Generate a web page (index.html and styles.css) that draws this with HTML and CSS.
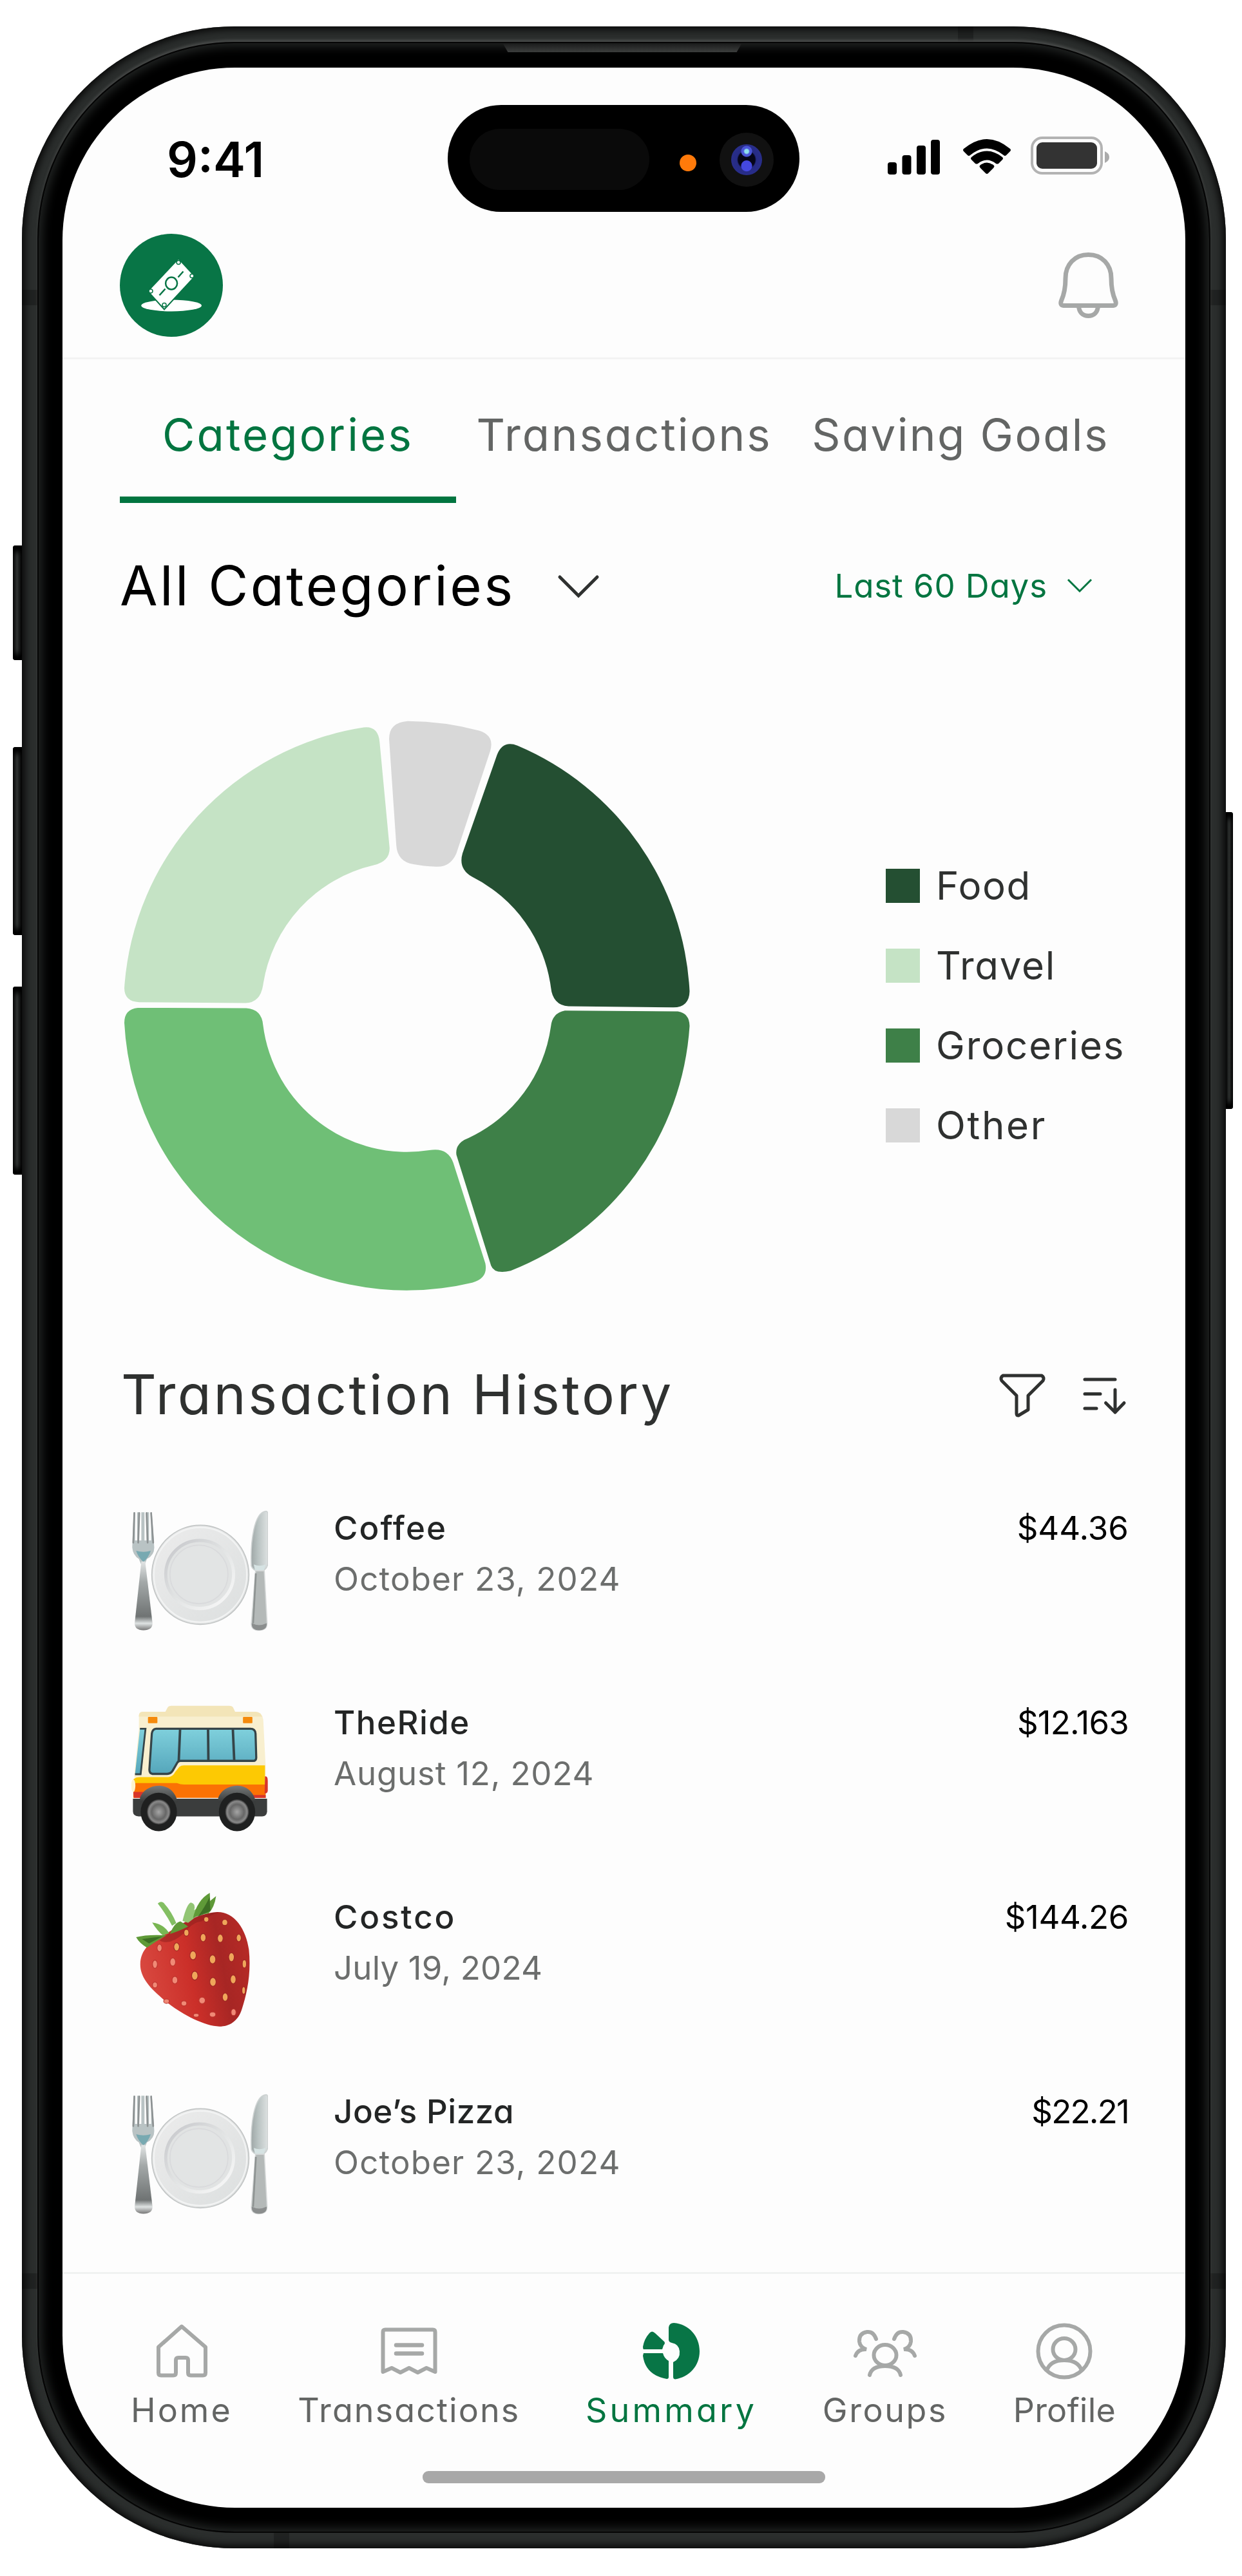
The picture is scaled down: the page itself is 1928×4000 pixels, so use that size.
FILE: index.html
```html
<!DOCTYPE html>
<html lang="en">
<head>
    <meta charset="UTF-8">
    <title>Summary - Categories</title>
    <link rel="stylesheet" href="styles.css">
</head>
<body>
    <div class="phone">
        <span class="side-button action"></span>
        <span class="side-button volume-up"></span>
        <span class="side-button volume-down"></span>
        <span class="side-button power"></span>
        <span class="band band-left-top"></span>
        <span class="band band-right-top"></span>
        <span class="band band-left-bottom"></span>
        <span class="band band-right-bottom"></span>
        <span class="band band-top"></span>
        <span class="band band-bottom"></span>
        <div class="bezel"></div>
        <div class="speaker"></div>

        <div class="screen">
            <div class="island">
                <span class="island-sensor"></span>
                <span class="island-dot"></span>
                <span class="island-camera"><span class="lens"></span></span>
            </div>

            <div class="status-bar">
                <span class="time">9:41</span>
                <svg class="status-icons" viewBox="1376 208 348 68">
                    <g fill="#000">
                        <rect x="1378" y="252" width="14" height="19" rx="4"/>
                        <rect x="1400.500" y="241" width="14" height="30" rx="4"/>
                        <rect x="1423" y="226" width="14" height="45" rx="4"/>
                        <rect x="1445" y="217" width="14" height="54" rx="4"/>
                        <path d="M1496 231Q1532 201 1568 231Q1570 233 1568 235L1562 241Q1560 243 1558 241Q1532 220 1506 241Q1504 243 1502 241L1496 235Q1494 233 1496 231Z"/>
                        <path d="M1508 244Q1532 225 1556 244Q1558 246 1556 248L1550 254Q1548 255 1546 254Q1532 243 1518 254Q1516 255 1514 254L1508 248Q1506 246 1508 244Z"/>
                        <path d="M1521 257Q1532 248 1543 257Q1544 259 1542 261L1534 269Q1532 271 1530 269L1522 261Q1520 259 1521 257Z"/>
                    </g>
                    <rect x="1602" y="214" width="108" height="55" rx="16" fill="none" stroke="#b3b3b3" stroke-width="4"/>
                    <rect x="1609" y="221" width="94" height="41" rx="9" fill="#333"/>
                    <path d="M1715 235Q1722 238 1722 244Q1722 250 1715 253Z" fill="#aaa"/>
                </svg>
            </div>

            <div class="header">
                <svg class="logo" viewBox="185.500 362.500 160 160">
                    <circle cx="265.500" cy="442.500" r="80" fill="#087546"/>
                    <ellipse cx="265.600" cy="474" rx="47" ry="9" fill="#fff"/>
                    <path d="M276.600 401L302 428.600L254.500 480L229 451.600Z" fill="#fff" stroke="#087546" stroke-width="2"/>
                    <ellipse cx="265.600" cy="439.500" rx="9" ry="9.500" fill="none" stroke="#087546" stroke-width="2.500"/>
                    <path d="M276 430L284 421M247 458L256 448" stroke="#087546" stroke-width="2.500"/>
                    <g fill="#fff" stroke="#087546" stroke-width="1.500">
                        <circle cx="276.600" cy="407" r="3"/>
                        <circle cx="297.500" cy="428" r="3"/>
                        <circle cx="254.500" cy="473" r="3"/>
                        <circle cx="233.500" cy="451.500" r="3"/>
                    </g>
                </svg>
                <svg class="bell" viewBox="1640 388 100 110">
                    <g fill="none" stroke="#a6a8a7" stroke-width="7" stroke-linejoin="round">
                        <path d="M1689.500 395.500C1668 395.500 1654 411 1654 432C1654 448 1652 457 1647.500 467Q1645 474 1651 474.500H1728Q1734 474 1731.500 467C1727 457 1725 448 1725 432C1725 411 1711 395.500 1689.500 395.500Z"/>
                        <path d="M1674.500 475C1675 485 1681 490.500 1689.500 490.500C1698 490.500 1704 485 1704.500 475"/>
                    </g>
                </svg>
            </div>

            <div class="tabs">
                <div class="tab active"><span class="tab-categories">Categories</span></div>
                <div class="tab"><span class="tab-transactions">Transactions</span></div>
                <div class="tab"><span class="tab-goals">Saving Goals</span></div>
            </div>

            <div class="filters">
                <div class="category-select">
                    <span class="heading heading-categories">All Categories</span>
                    <svg class="chevron" viewBox="0 0 66 38"><path d="M4 4L33 33L62 4" fill="none" stroke="#2f3130" stroke-width="5" stroke-linecap="round"/></svg>
                </div>
                <div class="range-select">
                    <span>Last 60 Days</span>
                    <svg class="chevron-small" viewBox="0 0 40 24"><path d="M2 3L20 21L38 3" fill="none" stroke="#027540" stroke-width="3"/></svg>
                </div>
            </div>

            <div class="chart-section">
                <svg class="donut" viewBox="190 1116 884 890">
                    <path fill="#d8d8d8" d="M632.800 1119.800A444 444 0 0 1 743.600 1134.500Q768 1142 761.100 1165.700L708.500 1325Q699 1347 677 1345.700Q657 1345 641.900 1342Q617 1338 615.200 1312.700L604 1147.300Q604 1122 632.800 1119.800Z"/>
                    <path fill="#244f32" d="M803.200 1157.800A439 439 0 0 1 1070.500 1539.200Q1070 1564 1045.300 1564.300L882.500 1562.500Q858 1561 855.100 1533A225 225 0 0 0 733 1361.600Q711 1349 718 1325L771.700 1171.800Q781 1149 803.200 1157.800Z"/>
                    <path fill="#3e8048" d="M876.900 1569.200L1052.300 1570.400Q1070 1573 1070.500 1593A439 439 0 0 1 792.700 1973.300Q765 1980 761.100 1961.600L708.500 1793.300Q706 1775 727.500 1767A225 225 0 0 0 855.100 1594.300Q857 1573 876.900 1569.200Z"/>
                    <path fill="#6fbf76" d="M214 1565L382.300 1565.500Q406 1567 408.300 1591.200A225 225 0 0 0 666.400 1786Q695 1781 703.600 1805.500L753.400 1961.700Q758 1985 733 1991.700A439 439 0 0 1 193 1588.200Q193 1567 214 1565Z"/>
                    <path fill="#c5e3c5" d="M564.700 1129.600Q587 1127 589.300 1152.200L604.700 1315.700Q606 1337 580.800 1343.300A225 225 0 0 0 408.300 1530Q404 1557 380.900 1557.600L216 1556.300Q193 1555 193 1534.300A439 439 0 0 1 564.700 1129.600Z"/>
                </svg>
                <ul class="legend">
                    <li><i class="swatch food"></i><span class="legend-food">Food</span></li>
                    <li><i class="swatch travel"></i><span class="legend-travel">Travel</span></li>
                    <li><i class="swatch groceries"></i><span class="legend-groceries">Groceries</span></li>
                    <li><i class="swatch other"></i><span class="legend-other">Other</span></li>
                </ul>
            </div>

            <div class="history-header">
                <span class="heading heading-history">Transaction History</span>
                <svg class="history-tools" viewBox="1550 2130 200 74">
                    <g fill="none" stroke="#2f3130" stroke-width="5" stroke-linecap="round" stroke-linejoin="round">
                        <path d="M1557 2136H1617Q1622 2139 1619 2144L1596 2167V2189L1581 2198Q1578 2198 1578 2195V2167L1555 2144Q1552 2139 1557 2136Z"/>
                        <path d="M1684 2142H1731M1684 2164.500H1708M1684 2187H1702M1731 2158V2193M1716.500 2178.500L1731 2193L1745 2178.500"/>
                    </g>
                </svg>
            </div>

            <div class="transactions">
                <div class="transaction">
                    <svg class="emoji" viewBox="99.600 1115 391 369.300" preserveAspectRatio="none"><use href="#plate"/></svg>
                    <div class="details">
                        <div class="name n-coffee">Coffee</div>
                        <div class="date d-october">October 23, 2024</div>
                    </div>
                    <div class="amount">$44.36</div>
                </div>
                <div class="transaction">
                    <svg class="emoji" viewBox="99.600 62.700 391 369.300" preserveAspectRatio="none">
                        <defs>
                            <linearGradient id="glass" x1="0" y1="0" x2="0" y2="1">
                                <stop offset="0" stop-color="#7fd0dc"/>
                                <stop offset="1" stop-color="#55a6bb"/>
                            </linearGradient>
                            <radialGradient id="hub">
                                <stop offset="0" stop-color="#a5a5a5"/>
                                <stop offset="0.600" stop-color="#666"/>
                                <stop offset="0.850" stop-color="#8a8a8a"/>
                                <stop offset="1" stop-color="#333"/>
                            </radialGradient>
                            <linearGradient id="arch" x1="0" y1="0" x2="0" y2="1">
                                <stop offset="0" stop-color="#777a7a"/>
                                <stop offset="0.600" stop-color="#3a3c3c"/>
                            </linearGradient>
                        </defs>
                        <path fill="#f3e5b8" d="M195 104L203 90Q206 85 214 85H380Q388 85 391 90L398 104Z"/>
                        <path fill="#f8efcf" d="M121 112Q121 102 132 101H455Q474 102 477 122L484 250V280H108L109 260L121 150Z"/>
                        <path fill="#f3e5b8" d="M121 112Q121 102 132 101H455Q470 102 474 114H121Z"/>
                        <rect x="147" y="115" width="27" height="17" rx="2" fill="#f58a0c"/>
                        <rect x="419" y="115" width="27" height="17" rx="2" fill="#f58a0c"/>
                        <path fill="url(#glass)" d="M124 147H141L128 270H110Z"/>
                        <path fill="none" stroke="#354448" stroke-width="5" d="M124 147H140L126 270H110"/>
                        <path fill="#fdc903" d="M105 284Q112 278 125 278H205Q218 277 225 264L237 250Q242 246 250 246H482V300H105Z"/>
                        <path fill="#fb7204" d="M105 294H230Q240 298 250 298H484V334H105Z"/>
                        <path fill="#d8352a" d="M105 318H140V334H107ZM440 326H484V334H440ZM482 276Q490 274 490 288V315Q489 323 481 322Z"/>
                        <path fill="url(#glass)" stroke="#354448" stroke-width="6" stroke-linejoin="round" d="M170 147H440Q454 147 455 160L457 225Q457 234 448 234H240Q233 234 229 242L218 260Q212 269 202 269H160Q151 268 151 258L158 160Q160 148 170 147Z"/>
                        <path stroke="#354448" stroke-width="7" d="M239 148L235 236M319 148L320 234M390 148L394 234"/>
                        <path fill="#3b3d3d" d="M104 336H488V372Q486 384 474 384H120Q104 383 104 370Z"/>
                        <path fill="url(#arch)" d="M124 334Q137 303 179 301Q221 303 232 345L228 372H128ZM348 334Q361 303 403 301Q445 303 456 345L452 372H352Z"/>
                        <ellipse cx="178" cy="372" rx="52" ry="52" fill="#1f2020"/>
                        <ellipse cx="402" cy="372" rx="52" ry="52" fill="#1f2020"/>
                        <circle cx="178" cy="372" r="34" fill="url(#hub)"/>
                        <circle cx="402" cy="372" r="34" fill="url(#hub)"/>
                        <ellipse cx="105" cy="301" rx="6" ry="17" fill="#fdf3cf"/>
                    </svg>
                    <div class="details">
                        <div class="name n-ride">TheRide</div>
                        <div class="date d-august">August 12, 2024</div>
                    </div>
                    <div class="amount a-ride">$12.163</div>
                </div>
                <div class="transaction">
                    <svg class="emoji" viewBox="99.600 588.900 391 369.300" preserveAspectRatio="none">
                        <defs>
                            <linearGradient id="berry" x1="0" y1="0.600" x2="1" y2="0.400">
                                <stop offset="0" stop-color="#d94a41"/>
                                <stop offset="0.450" stop-color="#cb2f29"/>
                                <stop offset="0.750" stop-color="#a72624"/>
                                <stop offset="1" stop-color="#b52a26"/>
                            </linearGradient>
                        </defs>
                        <path fill="url(#berry)" d="M125 785C125 745 155 722 195 704C235 680 290 646 345 643C395 642 428 690 436 745C443 810 430 865 416 905C403 945 370 957 335 951C280 940 220 905 180 870C150 845 125 818 125 785Z"/>
                        <path fill="#8b1d1c" opacity="0.500" d="M180 720Q210 735 250 700Q275 670 300 668Q330 648 350 644Q290 644 235 680Z"/>
                        <g fill="#5f9a38">
                            <path d="M113 711Q145 703 200 706Q170 722 144 739Q123 728 113 711Z"/>
                            <path d="M159 671Q190 674 208 700L190 706Q174 694 159 671Z" fill="#79b653"/>
                            <path d="M175 620Q182 612 192 618Q215 642 228 673L216 680Q200 650 175 620Z" fill="#83bf63"/>
                            <path d="M210 702Q222 672 240 668Q252 675 262 682Q235 695 210 702Z"/>
                            <path d="M246 667Q258 620 270 617Q285 620 279 638Q300 625 312 620Q290 655 262 672Z" fill="#92c574"/>
                            <path d="M276 659Q288 610 324 591L325 613L342 600Q337 632 320 647Q300 649 276 659Z"/>
                        </g>
                        <path fill="#3d6f24" d="M290 655Q310 630 323 603L326 640ZM130 716Q160 712 188 709L150 728Z"/>
                        <g fill="#efa65a" stroke="#9d2523" stroke-width="2">
                            <ellipse cx="257" cy="699" rx="7" ry="9"/><ellipse cx="305" cy="712" rx="8" ry="11"/><ellipse cx="354" cy="714" rx="8" ry="11"/><ellipse cx="407" cy="713" rx="7" ry="10"/>
                            <ellipse cx="314" cy="663" rx="7" ry="7"/><ellipse cx="367" cy="671" rx="8" ry="8"/>
                            <ellipse cx="229" cy="737" rx="8" ry="11"/><ellipse cx="276" cy="760" rx="9" ry="12"/><ellipse cx="332" cy="771" rx="9" ry="12"/><ellipse cx="386" cy="765" rx="8" ry="12"/><ellipse cx="423" cy="783" rx="6" ry="11"/>
                            <ellipse cx="281" cy="815" rx="9" ry="12"/><ellipse cx="333" cy="832" rx="9" ry="12"/><ellipse cx="391" cy="825" rx="8" ry="12"/><ellipse cx="368" cy="873" rx="8" ry="11"/><ellipse cx="421" cy="855" rx="5" ry="10"/>
                        </g>
                        <g fill="#f08a76" stroke="#bb332d" stroke-width="2">
                            <ellipse cx="180" cy="740" rx="7" ry="10"/><ellipse cx="167" cy="784" rx="7" ry="11"/><ellipse cx="218" cy="778" rx="8" ry="11"/><ellipse cx="224" cy="827" rx="8" ry="10"/><ellipse cx="167" cy="840" rx="7" ry="8"/>
                            <ellipse cx="200" cy="884" rx="8" ry="6"/><ellipse cx="250" cy="890" rx="8" ry="7"/><ellipse cx="302" cy="882" rx="9" ry="9"/><ellipse cx="332" cy="920" rx="9" ry="7"/><ellipse cx="392" cy="914" rx="7" ry="9"/><ellipse cx="285" cy="922" rx="8" ry="5"/>
                        </g>
                    </svg>
                    <div class="details">
                        <div class="name n-costco">Costco</div>
                        <div class="date d-july">July 19, 2024</div>
                    </div>
                    <div class="amount a-costco">$144.26</div>
                </div>
                <div class="transaction">
                    <svg class="emoji" viewBox="99.600 1115 391 369.300" preserveAspectRatio="none">
                        <defs>
                            <linearGradient id="handle" x1="0" y1="0" x2="0" y2="1">
                                <stop offset="0" stop-color="#e2e5e5"/>
                                <stop offset="0.300" stop-color="#a3a8a8"/>
                                <stop offset="0.800" stop-color="#6f7373"/>
                                <stop offset="0.900" stop-color="#dfe3e3"/>
                                <stop offset="1" stop-color="#777"/>
                            </linearGradient>
                            <linearGradient id="blade" x1="0" y1="0" x2="1" y2="0">
                                <stop offset="0" stop-color="#9fa7a7"/>
                                <stop offset="0.400" stop-color="#b8c2c1"/>
                                <stop offset="1" stop-color="#dde1e1"/>
                            </linearGradient>
                            <linearGradient id="rim" x1="0" y1="0" x2="1" y2="1">
                                <stop offset="0" stop-color="#ececec"/>
                                <stop offset="1" stop-color="#dcdfdf"/>
                            </linearGradient>
                            <linearGradient id="well" x1="0" y1="0" x2="1" y2="1">
                                <stop offset="0" stop-color="#c4c5c9"/>
                                <stop offset="0.500" stop-color="#e2e4e4"/>
                                <stop offset="1" stop-color="#fafafa"/>
                            </linearGradient>
                            <g id="plate">
                                <ellipse cx="297" cy="1309" rx="139" ry="134" fill="url(#rim)" stroke="#c2c5c5" stroke-width="3"/>
                                <ellipse cx="297" cy="1309" rx="133" ry="128" fill="none" stroke="#f2f3f3" stroke-width="4"/>
                                <ellipse cx="295" cy="1308" rx="97" ry="92" fill="#e1e3e3" stroke="url(#well)" stroke-width="9"/>
                                <ellipse cx="293" cy="1308" rx="83" ry="79" fill="#e2e4e4" stroke="#d9dadc" stroke-width="3"/>
                                <path d="M106 1140L102 1235Q104 1256 121 1266L127 1280H138L144 1266Q165 1256 165 1235L158 1140" fill="#b9c3c4" stroke="none"/>
                                <path d="M113 1138V1216M125 1138V1216M140 1138V1216M153 1138V1216" stroke="#fcfcfc" stroke-width="6"/>
                                <path d="M108 1142L105 1222M122 1142L119 1222M143 1142L146 1222M156 1142L162 1222" stroke="#8d9293" stroke-width="5" stroke-linecap="round"/>
                                <path d="M113 1244Q134 1250 155 1244Q148 1264 134 1274Q119 1262 113 1244Z" fill="#78a9b1"/>
                                <path d="M128 1273H139L160 1440Q160 1459 134 1459Q109 1459 109 1440Z" fill="url(#handle)"/>
                                <path d="M443 1285C440 1220 450 1140 485 1137Q490 1137 490 1145V1280Q487 1298 466 1300Q447 1298 443 1285Z" fill="url(#blade)" stroke="#cdd2d2" stroke-width="3"/>
                                <path d="M450 1281Q466 1288 484 1281L478 1300H454Z" fill="#d6e3e3"/>
                                <path d="M455 1298H480L488 1440Q488 1459 465 1459Q442 1459 443 1440Z" fill="#b4b9b8" stroke="#d5d8d8" stroke-width="3"/>
                                <path d="M456 1305L448 1440" stroke="#8e9392" stroke-width="5"/>
                                <path d="M444 1440Q465 1450 487 1440Q488 1459 465 1459Q443 1459 444 1440Z" fill="#8b8e8e"/>
                            </g>
                        </defs>
                        <use href="#plate"/>
                    </svg>
                    <div class="details">
                        <div class="name n-pizza">Joe’s Pizza</div>
                        <div class="date d-october">October 23, 2024</div>
                    </div>
                    <div class="amount a-pizza">$22.21</div>
                </div>
            </div>

            <div class="bottom-nav">
                <div class="nav-item nav-home">
                    <svg viewBox="239 3606 88 88"><path d="M283 3611.500L247 3643.500V3683.500Q247 3687.500 251 3687.500H270Q274 3687.500 274 3683.500V3664Q274 3660 278 3660H289Q293 3660 293 3664V3683.500Q293 3687.500 297 3687.500H316Q320 3687.500 320 3683.500V3643.500Z" fill="none" stroke="#a6a8a7" stroke-width="6" stroke-linejoin="round"/></svg>
                    <span>Home</span>
                </div>
                <div class="nav-item nav-transactions">
                    <svg viewBox="593 3606 88 88">
                        <path d="M600 3616.500H674Q677.500 3616.500 677.500 3620V3682L664 3676L650.500 3683L637 3676L623.500 3683L610 3676L596.500 3682V3620Q596.500 3616.500 600 3616.500Z" fill="none" stroke="#a6a8a7" stroke-width="6" stroke-linejoin="round"/>
                        <path d="M617 3640.500H657M617 3653.500H657" stroke="#a6a8a7" stroke-width="6.500" stroke-linecap="round"/>
                    </svg>
                    <span>Transactions</span>
                </div>
                <div class="nav-item nav-summary active">
                    <svg viewBox="998 3606 88 88">
                        <g fill="#087546">
                            <path d="M1046 3606C1070 3608 1086 3627 1086 3650C1086 3673 1070 3690 1048 3693.500Q1045 3693 1045 3690V3667Q1056 3662 1055 3650Q1054 3639 1043 3637Q1038 3636 1038 3632V3613Q1039 3606 1046 3606Z"/>
                            <path d="M1008 3622Q1012 3617 1017 3622L1030 3634Q1034 3637 1030 3641L1028 3647H999Q998 3646 998 3643Q1000 3631 1008 3622Z"/>
                            <path d="M999 3653H1029Q1031 3661 1038 3665V3690Q1038 3693 1035 3693Q1002 3687 998 3657Z"/>
                        </g>
                    </svg>
                    <span>Summary</span>
                </div>
                <div class="nav-item nav-groups">
                    <svg class="wide" viewBox="1320 3606 102 88">
                        <g fill="none" stroke="#a6a8a7" stroke-width="6" stroke-linecap="round">
                            <ellipse cx="1371" cy="3656" rx="17.500" ry="16"/>
                            <path d="M1347 3687Q1350 3673 1371 3673Q1392 3673 1395 3687"/>
                            <path d="M1357 3631Q1353 3619 1343 3620Q1330 3622 1331 3635Q1332 3644 1342 3647Q1329 3646 1325 3657"/>
                            <path d="M1385 3631Q1389 3619 1399 3620Q1412 3622 1411 3635Q1410 3644 1400 3647Q1413 3646 1417 3657"/>
                        </g>
                    </svg>
                    <span>Groups</span>
                </div>
                <div class="nav-item nav-profile">
                    <svg viewBox="1608 3606 88 88">
                        <g fill="none" stroke="#a6a8a7" stroke-width="6">
                            <circle cx="1652" cy="3650" r="40.500"/>
                            <ellipse cx="1652" cy="3647" rx="17.500" ry="17"/>
                            <path d="M1625 3680Q1630 3664 1652 3664Q1674 3664 1679 3680"/>
                        </g>
                    </svg>
                    <span>Profile</span>
                </div>
            </div>
            <div class="home-indicator"></div>
        </div>
    </div>
</body>
</html>
```

FILE: styles.css
```css
* {
    box-sizing: border-box;
}

body {
    margin: 0;
    height: 4000px;
    overflow: hidden;
    background-color: #fff;
    font-family: Inter, "Liberation Sans", sans-serif;
    font-feature-settings: "cv11";
}

svg {
    display: block;
    flex: none;
}

/* phone frame */
.phone {
    position: relative;
    width: 1869px;
    height: 3916px;
    margin: 41px 0 0 34px;
    padding: 64px 63px;
    border-radius: 330px;
    background-color: #2b2e2d;
    box-shadow: inset 0 0 12px 5px #090909;
}

.bezel {
    position: absolute;
    inset: 24px;
    border: 2px solid #050505;
    border-radius: 306px;
    background-color: #000;
    box-shadow: inset 0 0 16px 5px #242726, 0 -4px 4px -1px #4a4c4b;
}

.speaker {
    position: absolute;
    top: 27px;
    left: 747px;
    width: 370px;
    height: 13px;
    background: linear-gradient(#1c1d1d, #3c3e3d);
    clip-path: polygon(0 0, 100% 0, 98% 100%, 2% 100%);
}

.side-button {
    position: absolute;
    left: -14px;
    width: 14px;
    border-radius: 4px 0 0 4px;
    background: linear-gradient(90deg, #0a0a0a, #2f3231 45%, #050505);
    box-shadow: inset 0 14px 8px -4px #000, inset 0 -14px 8px -4px #000;
}

.action {
    top: 806px;
    height: 178px;
}

.volume-up {
    top: 1119px;
    height: 292px;
}

.volume-down {
    top: 1491px;
    height: 292px;
}

.power {
    top: 1220px;
    left: auto;
    right: -11px;
    width: 11px;
    height: 461px;
    border-radius: 0 4px 4px 0;
}

.band {
    position: absolute;
    width: 24px;
    height: 24px;
    background-color: rgba(0, 0, 0, 0.25);
}

.band-left-top { top: 409px; left: 0; }
.band-right-top { top: 409px; right: 0; }
.band-left-bottom { bottom: 403px; left: 0; }
.band-right-bottom { bottom: 403px; right: 0; }
.band-top { top: 0; left: 1453px; }
.band-bottom { bottom: 0; left: 391px; }

/* screen */
.screen {
    position: relative;
    display: flex;
    flex-direction: column;
    width: 1743px;
    height: 3789px;
    border-radius: 268px;
    background-color: #fdfdfd;
    overflow: hidden;
}

.island {
    position: absolute;
    top: 58px;
    left: 598px;
    width: 546px;
    height: 166px;
    border-radius: 83px;
    background-color: #000;
}

.island-sensor {
    position: absolute;
    top: 37px;
    left: 34px;
    width: 279px;
    height: 95px;
    border-radius: 48px;
    background-color: #0a0a0a;
}

.island-dot {
    position: absolute;
    top: 77px;
    left: 360px;
    width: 26px;
    height: 26px;
    border-radius: 50%;
    background-color: #ff7a0a;
}

.island-camera {
    position: absolute;
    top: 43px;
    left: 422px;
    width: 84px;
    height: 84px;
    padding: 18px;
    border-radius: 50%;
    background-color: #111;
}

.lens {
    display: block;
    width: 48px;
    height: 48px;
    border-radius: 50%;
    background:
        radial-gradient(circle at 50% 23%, #8fe0ee 0 3px, #4a55d8 5px 8px, transparent 9px),
        radial-gradient(circle at 50% 70%, #4448e0 0 8px, transparent 9px),
        radial-gradient(circle, #05051a 0 13px, #262b85 15px, #2b3090);
}

.status-bar {
    display: flex;
    justify-content: space-between;
    align-items: center;
    height: 225px;
    padding: 60px 116px 0 162px;
}

.time {
    font-size: 75px;
    font-weight: 600;
    color: #000;
}

.status-icons {
    width: 348px;
    height: 68px;
    margin-top: -11px;
}

.header {
    display: flex;
    justify-content: space-between;
    align-items: center;
    height: 228px;
    padding: 0 100px 0 89px;
    border-bottom: 3px solid #f3f3f3;
}

.logo {
    width: 160px;
    height: 160px;
}

.bell {
    width: 100px;
    height: 110px;
}

.tabs {
    display: flex;
    height: 223px;
    padding: 0 88px 0 89px;
}

.tab {
    display: flex;
    justify-content: center;
    width: 522px;
    padding-top: 72px;
    font-size: 69px;
    line-height: 90px;
    white-space: nowrap;
    color: #636564;
    border-bottom: 10px solid transparent;
}

.tab.active {
    color: #027540;
    border-color: #027540;
}

.tab-categories { letter-spacing: 3.1px; }
.tab-transactions { letter-spacing: 2.9px; }
.tab-goals { letter-spacing: 2.4px; }

.filters {
    display: flex;
    justify-content: space-between;
    align-items: center;
    height: 256px;
    padding: 0 144px 0 89px;
}

.category-select,
.range-select {
    display: flex;
    align-items: center;
}

.category-select {
    gap: 66px;
    color: #000;
}

.range-select {
    gap: 30px;
    font-size: 51px;
    letter-spacing: 0.9px;
    color: #027540;
}

.heading {
    font-size: 85px;
    white-space: nowrap;
}

.heading-categories { letter-spacing: 3.4px; }
.heading-history { letter-spacing: 3.6px; }

.chevron {
    width: 66px;
    height: 38px;
    margin-top: 4px;
}

.chevron-small {
    width: 40px;
    height: 24px;
}

.chart-section {
    display: flex;
    justify-content: space-between;
    height: 969px;
    padding: 79px 88px 0 93px;
}

.donut {
    width: 884px;
    height: 890px;
}

.legend {
    width: 377px;
    margin: 197px 0 0;
    padding: 0;
    list-style: none;
}

.legend li {
    display: flex;
    align-items: center;
    gap: 25px;
    height: 124px;
    font-size: 60px;
    color: #2f3130;
}

.legend-food { letter-spacing: 1.5px; }
.legend-travel { letter-spacing: 1.7px; }
.legend-groceries { letter-spacing: 1.9px; }
.legend-other { letter-spacing: 2.7px; }

.swatch {
    width: 53px;
    height: 53px;
}

.food { background-color: #244f32; }
.travel { background-color: #c5e3c5; }
.groceries { background-color: #3e8048; }
.other { background-color: #d8d8d8; }

.history-header {
    display: flex;
    justify-content: space-between;
    align-items: center;
    height: 318px;
    padding: 0 90px 0 91px;
    color: #2f3130;
}

.history-tools {
    width: 200px;
    height: 74px;
    margin-top: 4px;
}

.transactions {
    height: 1204px;
}

.transaction {
    display: flex;
    height: 302px;
    padding: 9px 88px 0 107px;
    font-size: 51px;
    line-height: 79px;
}

.emoji {
    width: 212px;
    height: 212px;
    margin: 1px 102px 0 0;
}

.details {
    flex: 1;
    white-space: nowrap;
}

.name {
    font-weight: 500;
    color: #232525;
}

.date {
    color: #6c6e6d;
}

.amount {
    color: #000;
}

.n-coffee { letter-spacing: 2.1px; }
.n-ride { letter-spacing: 1.5px; }
.n-costco { letter-spacing: 2.9px; }
.n-pizza { letter-spacing: 0.6px; }
.d-october { letter-spacing: 1.2px; }
.d-august { letter-spacing: 0.8px; }
.d-july { letter-spacing: 0.2px; }
.a-ride { letter-spacing: -0.8px; }
.a-costco { letter-spacing: -0.4px; }
.a-pizza { letter-spacing: -1.8px; }

/* bottom navigation */
.bottom-nav {
    display: flex;
    justify-content: space-between;
    height: 309px;
    padding: 76px 108px 0 106px;
    border-top: 3px solid #f0f2f1;
}

.nav-item {
    display: flex;
    flex-direction: column;
    align-items: center;
    gap: 18px;
    font-size: 52px;
    line-height: 60px;
    color: #636564;
}

.nav-item.active {
    color: #027540;
}

.nav-home { letter-spacing: 3px; }
.nav-transactions { letter-spacing: 2.1px; }
.nav-summary { letter-spacing: 4.2px; }
.nav-groups { letter-spacing: 2.6px; }
.nav-profile { letter-spacing: 0.2px; }

.nav-item svg {
    width: 88px;
    height: 88px;
}

.nav-item svg.wide {
    width: 102px;
}

.home-indicator {
    width: 625px;
    height: 19px;
    margin-left: 559px;
    border-radius: 9px;
    background-color: #a8a8a8;
}
```
